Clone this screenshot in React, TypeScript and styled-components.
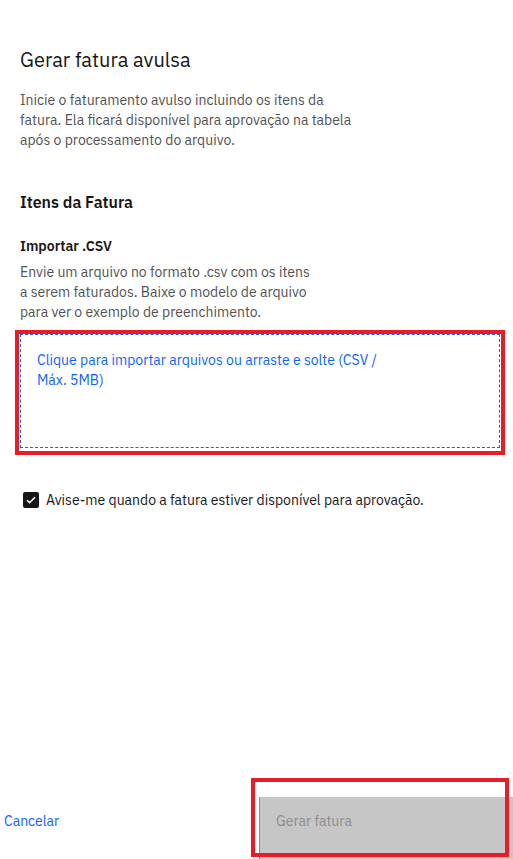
import * as React from 'react';
import styled, { createGlobalStyle } from 'styled-components';

const GlobalStyle = createGlobalStyle`
    html, body {
        margin: 0;
        padding: 0;
        background: #ffffff;
    }

    body {
        font-family: "IBM Plex Sans", "Noto Sans", "Open Sans", Arial, sans-serif;
        color: #161616;
    }
`;

const Page = styled.div`
    height: 100vh;
    display: flex;
    flex-direction: column;
    overflow: hidden;
`;

const Content = styled.div`
    flex: 1;
    padding: 46px 20px 0 20px;
`;

const Title = styled.h2`
    margin: 0;
    font-size: 20px;
    line-height: 28px;
    font-weight: 400;
    color: #161616;
`;

const Text = styled.p<{ $top: number }>`
    margin: ${p => p.$top}px 0 0;
    font-size: 14px;
    line-height: 20px;
    color: #525252;
`;

const SectionTitle = styled.h3`
    margin: 40px 0 0;
    font-size: 16px;
    line-height: 24px;
    font-weight: 600;
`;

const FieldTitle = styled.h4`
    margin: 22px 0 0;
    font-size: 14px;
    line-height: 20px;
    font-weight: 600;
`;

// red annotation frame drawn around the drop zone in the reference
const Highlight = styled.div`
    margin: 8px -12px 0 -5px;
    border: 4px solid #e81c24;
    padding: 0 1px 3px 1px;
`;

const DropZone = styled.div`
    height: 114px;
    box-sizing: border-box;
    border: 1px dashed #0f62fe;
    padding: 15px 16px;
    font-size: 14px;
    line-height: 20px;
    color: #0f62fe;
    cursor: pointer;
`;

const CheckRow = styled.label`
    margin: 35px 0 0 3px;
    display: flex;
    align-items: center;
    gap: 7px;
    font-size: 14px;
    line-height: 20px;
    color: #161616;
`;

const Box = styled.span`
    width: 16px;
    height: 16px;
    border-radius: 2px;
    background: #161616;
    display: flex;
    align-items: center;
    justify-content: center;
`;

const Footer = styled.div`
    height: 62px;
    display: grid;
    grid-template-columns: 259px 1fr;
`;

const GhostButton = styled.button`
    border: none;
    background: transparent;
    padding: 14px 4px 0;
    text-align: left;
    align-self: stretch;
    display: flex;
    align-items: flex-start;
    font-family: inherit;
    font-size: 14px;
    line-height: 20px;
    color: #0f62fe;
`;

const PrimaryCell = styled.div`
    position: relative;
`;

const PrimaryButton = styled.button`
    width: 100%;
    height: 100%;
    box-sizing: border-box;
    border: none;
    border-left: 1px solid #8d8d8d;
    background: #c6c6c6;
    padding: 14px 16px 0;
    display: flex;
    align-items: flex-start;
    font-family: inherit;
    font-size: 14px;
    line-height: 20px;
    color: #8d8d8d;
`;

const Marker = styled.div`
    position: absolute;
    left: -8px;
    top: -19px;
    right: 4px;
    bottom: 2px;
    border: 4px solid #e81c24;
    pointer-events: none;
`;

const Check = () => (
    <svg width="10" height="8" viewBox="0 0 10 8" fill="none">
        <path d="M1 4.2 3.6 6.6 9 1.2" stroke="#ffffff" strokeWidth="1.5" />
    </svg>
);

export default function App() {
    return (
        <Page>
            <GlobalStyle />
            <Content>
                <Title>Gerar fatura avulsa</Title>
                <Text $top={16}>
                    Inicie o faturamento avulso incluindo os itens da<br />
                    fatura. Ela ficará disponível para aprovação na tabela<br />
                    após o processamento do arquivo.
                </Text>
                <SectionTitle>Itens da Fatura</SectionTitle>
                <FieldTitle>Importar .CSV</FieldTitle>
                <Text $top={6}>
                    Envie um arquivo no formato .csv com os itens<br />
                    a serem faturados. Baixe o modelo de arquivo<br />
                    para ver o exemplo de preenchimento.
                </Text>
                <Highlight>
                    <DropZone>
                        Clique para importar arquivos ou arraste e solte (CSV /<br />
                        Máx. 5MB)
                    </DropZone>
                </Highlight>
                <CheckRow>
                    <Box><Check /></Box>
                    Avise-me quando a fatura estiver disponível para aprovação.
                </CheckRow>
            </Content>
            <Footer>
                <GhostButton>Cancelar</GhostButton>
                <PrimaryCell>
                    <PrimaryButton disabled>Gerar fatura</PrimaryButton>
                    <Marker />
                </PrimaryCell>
            </Footer>
        </Page>
    );
}
